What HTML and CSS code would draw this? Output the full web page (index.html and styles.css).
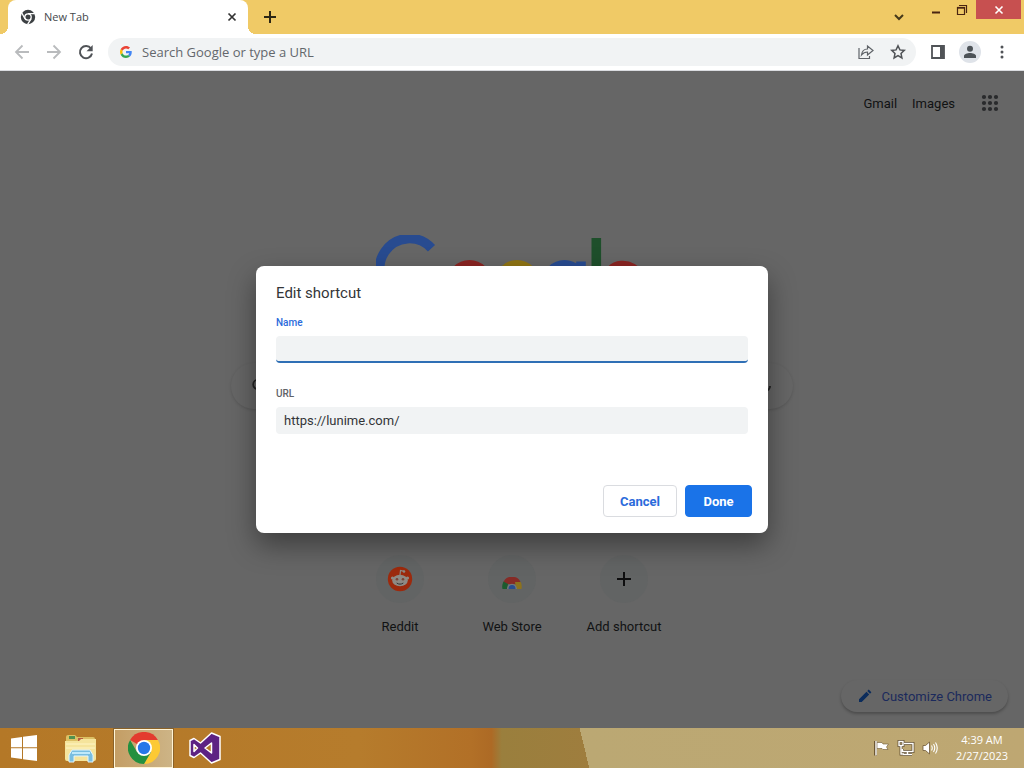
FILE: index.html
```html
<!DOCTYPE html>
<html lang="en">
<head>
<meta charset="utf-8">
<title>New Tab</title>
<link rel="stylesheet" href="styles.css">
</head>
<body>
<div class="tabstrip">
  <div class="tab">
    <svg class="tab-icon" width="16" height="16" viewBox="0 0 16 16"><circle cx="8" cy="8" r="7.2" fill="#3c4043"/><circle cx="8" cy="8" r="3.2" fill="none" stroke="#fff" stroke-width="1.3"/><path d="M8 4.6h6.8M5 9.8 1.8 4M11 9.8 7.6 15.4" stroke="#fff" stroke-width="1.3" fill="none"/></svg>
    <span class="tab-title">New Tab</span>
    <button class="icon-btn" aria-label="Close tab"><svg width="16" height="16" viewBox="0 0 16 16"><path d="m4.5 4.5 7 7m0-7-7 7" stroke="#333" stroke-width="1.7"/></svg></button>
  </div>
  <button class="icon-btn new-tab" aria-label="New tab"><svg width="16" height="16" viewBox="0 0 16 16"><path d="M8 2v12M2 8h12" stroke="#2c2614" stroke-width="2"/></svg></button>
  <div class="window-controls">
    <button class="icon-btn search-tabs" aria-label="Search tabs"><svg width="14" height="14" viewBox="0 0 14 14"><path d="m3 5 4 4 4-4" stroke="#46391a" stroke-width="2" fill="none"/></svg></button>
    <button class="icon-btn caption" aria-label="Minimize"><svg width="12" height="14" viewBox="0 0 12 14"><path d="M2 9.500h8" stroke="#4a2512" stroke-width="2"/></svg></button>
    <button class="icon-btn caption" aria-label="Restore"><svg width="12" height="12" viewBox="0 0 12 12"><path d="M1.500 3.500h7v7h-7zM3 1.500h7.500V9" stroke="#4a2512" stroke-width="1.200" fill="none"/><path d="M1 3.800h8" stroke="#4a2512" stroke-width="1.800"/></svg></button>
    <button class="icon-btn close" aria-label="Close"><svg width="12" height="12" viewBox="0 0 12 12"><path d="m2.500 2.500 7 7m0-7-7 7" stroke="#fff" stroke-width="1.600"/></svg></button>
  </div>
</div>

<div class="toolbar">
  <button class="icon-btn nav" aria-label="Back"><svg width="16" height="16" viewBox="0 0 16 16"><path d="M15 8H2m6.500-6.500L2 8l6.500 6.500" stroke="#b9bbbd" stroke-width="1.800" fill="none"/></svg></button>
  <button class="icon-btn nav" aria-label="Forward"><svg width="16" height="16" viewBox="0 0 16 16"><path d="M1 8h13M7.500 1.500 14 8l-6.500 6.500" stroke="#b9bbbd" stroke-width="1.800" fill="none"/></svg></button>
  <button class="icon-btn nav" aria-label="Reload"><svg width="16" height="16" viewBox="0 0 16 16"><path d="M13 4.500A6.100 6.100 0 1 0 14 9.500" stroke="#505357" stroke-width="2" fill="none"/><path d="M14.700 1v6.200H8.500z" fill="#505357"/></svg></button>
  <div class="omnibox">
    <svg width="12" height="12" viewBox="0 0 48 48"><path fill="#EA4335" d="M24 9.500c3.540 0 6.710 1.220 9.210 3.600l6.850-6.850C35.900 2.380 30.470 0 24 0 14.620 0 6.510 5.380 2.560 13.220l7.980 6.190C12.430 13.720 17.740 9.500 24 9.500z"/><path fill="#4285F4" d="M46.980 24.550c0-1.570-.150-3.090-.380-4.550H24v9.020h12.940c-.580 2.960-2.260 5.480-4.780 7.180l7.730 6c4.510-4.180 7.090-10.360 7.090-17.650z"/><path fill="#FBBC05" d="M10.530 28.590c-.480-1.450-.760-2.990-.760-4.590s.270-3.140.760-4.590l-7.980-6.190C.920 16.460 0 20.120 0 24s.920 7.540 2.560 10.780l7.970-6.190z"/><path fill="#34A853" d="M24 48c6.480 0 11.930-2.130 15.890-5.810l-7.730-6c-2.150 1.450-4.920 2.300-8.160 2.300-6.260 0-11.570-4.220-13.470-9.910l-7.980 6.190C6.510 42.620 14.620 48 24 48z"/></svg>
    <input class="address" type="text" placeholder="Search Google or type a URL" aria-label="Address bar">
    <button class="icon-btn" aria-label="Share"><svg width="18" height="16" viewBox="0 0 18 16"><path d="M2 4v10.500h10.500V12M4.500 11c.5-4 3-6 6-6V2l5.500 4.500-5.500 4.500V8C8 8 6.200 8.800 4.500 11z" stroke="#5f6368" stroke-width="1.200" fill="none"/></svg></button>
    <button class="icon-btn" aria-label="Bookmark"><svg width="16" height="16" viewBox="0 0 16 16"><path d="m8 1.800 1.900 4.100 4.400.5L11 9.400l.9 4.500L8 11.600l-3.900 2.300.9-4.500-3.300-3 4.400-.5z" stroke="#505357" stroke-width="1.500" fill="none"/></svg></button>
  </div>
  <button class="icon-btn panel" aria-label="Side panel"><svg width="14" height="14" viewBox="0 0 14 14"><path d="M1 1h12v12H1z" stroke="#505357" stroke-width="1.800" fill="none"/><path d="M9 1h4v12H9z" fill="#505357"/></svg></button>
  <button class="icon-btn avatar" aria-label="Profile"><svg width="14" height="14" viewBox="0 0 14 14"><circle cx="7" cy="3.800" r="3" fill="#4d5358"/><path d="M1 13v-2c0-2 3.500-3 6-3s6 1 6 3v2z" fill="#4d5358"/></svg></button>
  <button class="icon-btn more" aria-label="Menu"><svg width="4" height="14" viewBox="0 0 4 14"><g fill="#505357"><circle cx="2" cy="2" r="1.500"/><circle cx="2" cy="7" r="1.500"/><circle cx="2" cy="12" r="1.500"/></g></svg></button>
</div>

<main class="page">
  <nav class="page-nav">
    <a href="#gmail">Gmail</a>
    <a href="#images">Images</a>
    <button class="icon-btn apps" aria-label="Google apps"><svg width="18" height="18" viewBox="0 0 18 18"><path d="M3 3h0M9 3h0M15 3h0M3 9h0M9 9h0M15 9h0M3 15h0M9 15h0M15 15h0" stroke="#292a2c" stroke-width="4.200" stroke-linecap="round"/></svg></button>
  </nav>
  <svg class="logo" width="272" height="92" viewBox="0 0 272 92" fill="none" stroke-width="9.600" role="img" aria-label="Google">
    <path d="M55.500 13.300A29.700 29.700 0 1 0 63 36.700H36" stroke="#284b90"/>
    <circle cx="93.500" cy="47.200" r="17.500" stroke="#8a2422"/>
    <circle cx="141" cy="47.200" r="17.500" stroke="#8f7414"/>
    <path d="M205 26.500V67c0 11-7 17-16 17-7 0-12-4-14.500-9" stroke="#284b90"/><circle cx="188.500" cy="47.200" r="17.500" stroke="#284b90"/>
    <path d="M220.300 3v65" stroke="#1e4f2b"/>
    <path d="M232 55l32-13c-6-16-33-16-33 5 0 19 25 24 34 10" stroke="#8a2422"/>
  </svg>
  <div class="search">
    <svg width="16" height="16" viewBox="0 0 16 16"><circle cx="7" cy="6.500" r="4.800" stroke="#222" stroke-width="1.800" fill="none"/><path d="m10.500 10 4 4" stroke="#222" stroke-width="1.800"/></svg>
    <svg width="16" height="16" viewBox="0 0 16 16"><path d="M8 1v7M3 8a5 5 0 0 0 10 0M8 13v3" stroke="#222" stroke-width="2" fill="none"/></svg>
  </div>
  <div class="shortcuts">
    <a class="shortcut" href="#reddit"><span class="tile"><svg width="26" height="26" viewBox="0 0 26 26"><circle cx="13" cy="13" r="12.200" fill="#9c2a0d"/><path d="m13 9 .5-4.500 3.700.8" stroke="#8e8a84" stroke-width="1.200" fill="none"/><circle cx="17" cy="5.500" r="1.300" fill="#8e8a84"/><circle cx="5.500" cy="12" r="1.600" fill="#8e8a84"/><circle cx="20.500" cy="12" r="1.600" fill="#8e8a84"/><ellipse cx="13" cy="14.500" rx="7.800" ry="5.800" fill="#8e8a84"/><circle cx="10" cy="13.200" r="1.300" fill="#7a4436"/><circle cx="16" cy="13.200" r="1.300" fill="#7a4436"/><path d="M9.700 17c2 1.500 4.600 1.500 6.600 0" stroke="#333" fill="none"/></svg></span>Reddit</a>
    <a class="shortcut" href="#store"><span class="tile"><svg class="store" width="20" height="20" viewBox="0 0 20 20"><path d="M1.500 9C3 5.500 5.500 4 8 4h4c2.500 0 5 1.500 6.500 5L15 11H5z" fill="#862b26"/><path d="M1.500 8.500 6 11l-1 5H.5c-.7-3 0-5 1-7.500z" fill="#1c5b2e"/><path d="M13 9h5.700c1 2 1.200 4.500.8 7H14z" fill="#8d721d"/><path d="M5 16a5 5.300 0 0 1 10 0z" fill="#75777a"/><path d="M6.500 16a3.500 4 0 0 1 7 0z" fill="#294d91"/></svg></span>Web Store</a>
    <a class="shortcut" href="#add"><span class="tile"><svg width="16" height="16" viewBox="0 0 16 16"><path d="M8 1v14M1 8h14" stroke="#0e0e0f" stroke-width="2"/></svg></span>Add shortcut</a>
  </div>
  <button class="customize"><svg width="16" height="16" viewBox="0 0 16 16"><path d="m2 11.300 7.500-7.500 2.700 2.700L4.700 14H2zM10.300 3l1.400-1.400 2.700 2.700L13 5.700z" fill="#0b2c5c"/></svg>Customize Chrome</button>

  <div class="backdrop">
    <form class="dialog" role="dialog" aria-labelledby="dialog-title">
      <h1 class="dialog-title" id="dialog-title">Edit shortcut</h1>
      <label class="label label-active" for="name">Name</label>
      <input class="field field-active" id="name" type="text">
      <label class="label" for="url">URL</label>
      <input class="field" id="url" type="text" value="https://lunime.com/">
      <div class="actions">
        <button class="btn" type="button">Cancel</button>
        <button class="btn btn-primary" type="button">Done</button>
      </div>
    </form>
  </div>
</main>

<footer class="taskbar">
  <button class="icon-btn task" aria-label="Start"><svg width="28" height="28" viewBox="0 0 28 28"><path d="M1 4.500 12 3v10.300H1zM13 2.800 27 1v12.300H13zM1 14.300h11V25L1 23.500zM13 14.300h14V27l-14-1.800z" fill="#fff"/></svg></button>
  <button class="icon-btn task" aria-label="File Explorer"><svg width="34" height="32" viewBox="0 0 34 32"><path d="M2 5q0-2 2-2h7l2 2h16q2 0 2 2v20H2z" fill="#dcc064"/><path d="M5 4h6v3H5z" fill="#52914f"/><path d="M14 6h5v3h-5z" fill="#b65b42"/><path d="M23 7h6v3h-6z" fill="#4c91b3"/><path d="M1 9h14l2-2h15v20q0 2-2 2H3q-2 0-2-2z" fill="#f5e49c"/><path d="M2 12h29M2 16h29" stroke="#fff5c5"/><path d="M5 30v-7l3-5h18l3 5v7h-5v-6H10v6z" fill="#79bee0" stroke="#e2f5fc"/><path d="M8 21h18" stroke="#bfe9fa" stroke-width="2"/></svg></button>
  <button class="icon-btn task task-active" aria-label="Google Chrome"><svg width="32" height="32" viewBox="0 0 32 32"><path d="M16 16 2.100 8A16 16 0 0 1 29.900 8z" fill="#e33b2e"/><path d="M16 8h13.900A16 16 0 0 1 16 32l7-12z" fill="#fcc934"/><path d="M2.100 8A16 16 0 0 0 16 32l7-12-14 0z" fill="#23903f"/><circle cx="16" cy="16" r="8" fill="#fff"/><circle cx="16" cy="16" r="6.200" fill="#2677e8"/></svg></button>
  <button class="icon-btn task" aria-label="Visual Studio"><svg width="34" height="34" viewBox="0 0 34 34"><path fill-rule="evenodd" d="M23.500 2 32 5.500v23L23.500 32 12.500 22 6 26.500 2 24.500V9.500L6 7.500l6.500 4.500zM23.500 12 17 17l6.500 5zM6 13.500v7L9.500 17z" fill="#5d2283" stroke="#fff" stroke-width="1.500" stroke-linejoin="round"/></svg></button>
  <div class="tray">
    <svg width="16" height="16" viewBox="0 0 16 16"><path d="M2.500 1.500V16M3 2.500h5l1 1.500h5.500L12.500 7l1.500 2.500H9L8 8.500H3z" fill="#fff" stroke="#6d5733" stroke-width=".6"/><path d="M1.500 1v14.500" stroke="#6d5733" stroke-width="3"/><path d="M2 1v14.500" stroke="#fff" stroke-width="1.400"/></svg>
    <svg width="18" height="16" viewBox="0 0 18 16"><path d="M7 3.500h9v8H5.500V9M10.500 12v2.500M6 14.500h9M2 1.500h4v4H2zM4 6v8h3" fill="none" stroke="#5e4b2d" stroke-width="2.800"/><path d="M7 3.500h9v8H5.500V9M10.500 12v2.500M6 14.500h9M2 1.500h4v4H2zM4 6v8h3" fill="none" stroke="#fff" stroke-width="1.400"/></svg>
    <svg width="16" height="16" viewBox="0 0 16 16"><path d="M1 5.500h2.500L7.500 2v12l-4-3.500H1z" fill="#fff" stroke="#6d5733" stroke-width=".8"/><path d="M9.500 5.500q1.500 2.500 0 5M11.500 4q2.500 4 0 8M13.500 2.500q3.500 5.500 0 11" stroke="#fff" stroke-width="1.100" fill="none"/></svg>
    <div class="clock"><time>4:39 AM</time><time>2/27/2023</time></div>
  </div>
</footer>
</body>
</html>
```
FILE: styles.css
```css
* { box-sizing: border-box; }

body {
  margin: 0;
  min-height: 100vh;
  display: flex;
  flex-direction: column;
  font-family: Roboto, "Liberation Sans", sans-serif;
  font-size: 13px;
  background: #fff;
}

button, input { font: inherit; }
a { color: inherit; text-decoration: none; }
svg { display: block; flex: none; }

.icon-btn {
  display: flex;
  align-items: center;
  justify-content: center;
  padding: 0;
  border: 0;
  background: none;
}

.tabstrip {
  display: flex;
  align-items: center;
  height: 34px;
  padding-left: 8px;
  background: #f0ca66;
}

.tab {
  position: relative;
  display: flex;
  align-items: center;
  gap: 8px;
  width: 240px;
  height: 34px;
  padding: 0 8px 0 12px;
  border-radius: 8px 8px 0 0;
  background: #fff;
}

.tab::before, .tab::after {
  content: "";
  position: absolute;
  bottom: 0;
  width: 8px;
  height: 8px;
}
.tab::before { left: -8px; background: radial-gradient(circle at 0 0, transparent 8px, #fff 8px); }
.tab::after { right: -8px; background: radial-gradient(circle at 100% 0, transparent 8px, #fff 8px); }

.tab-title {
  flex: 1;
  font: 11px/16px "Open Sans", sans-serif;
  color: #45484c;
}

.new-tab { width: 28px; height: 28px; margin-left: 8px; }

.window-controls {
  display: flex;
  align-items: flex-start;
  align-self: stretch;
  margin-left: auto;
  padding-right: 3px;
}
.search-tabs { width: 28px; height: 34px; margin-right: 10px; }
.caption { width: 26px; height: 20px; }
.close { width: 45px; height: 19px; margin-left: 1px; background: #c75050; }

.toolbar {
  display: flex;
  align-items: center;
  height: 37px;
  padding: 0 8px 0 6px;
  background: #fff;
  border-bottom: 1px solid #dadce0;
}
.nav { width: 32px; height: 28px; }

.omnibox {
  display: flex;
  align-items: center;
  flex: 1;
  gap: 8px;
  height: 28px;
  margin: 0 8px 0 6px;
  padding: 0 6px 0 12px;
  border-radius: 14px;
  background: #f1f3f4;
}
.omnibox .icon-btn { width: 24px; height: 24px; }

.address {
  flex: 1;
  min-width: 0;
  padding: 0 2px;
  border: 0;
  outline: 0;
  background: none;
  font: 13px "Open Sans", sans-serif;
}
.address::placeholder { color: #63676c; opacity: 1; }

.panel { width: 28px; height: 28px; }
.avatar {
  width: 22px;
  height: 22px;
  margin: 0 7px;
  border-radius: 50%;
  background: #dfe3e9;
}
.more { width: 28px; height: 28px; }

.page {
  position: relative;
  flex: 1;
  display: flex;
  flex-direction: column;
  align-items: center;
  background: #666;
  color: #111213;
}

.page-nav {
  display: flex;
  align-items: center;
  align-self: stretch;
  justify-content: flex-end;
  gap: 15px;
  height: 64px;
  padding-right: 24px;
}
.apps { width: 20px; height: 40px; margin-left: 10px; }

.logo { margin-top: 100px; }

.search {
  display: flex;
  align-items: center;
  justify-content: space-between;
  width: 562px;
  max-width: 90%;
  height: 46px;
  margin-top: 36px;
  padding: 0 20px;
  border-radius: 23px;
  box-shadow: 0 1px 3px rgba(0, 0, 0, .15);
}

.shortcuts { display: flex; margin-top: 146px; }
.shortcut {
  display: flex;
  flex-direction: column;
  align-items: center;
  gap: 16px;
  width: 112px;
  line-height: 16px;
}
.tile {
  display: flex;
  align-items: center;
  justify-content: center;
  width: 48px;
  height: 48px;
  border-radius: 50%;
  background: #626464;
}
.store { margin-top: 8px; }

.customize {
  display: flex;
  align-items: center;
  gap: 8px;
  height: 32px;
  margin: auto 16px 16px auto;
  padding: 0 16px;
  border: 0;
  border-radius: 16px;
  background: #666;
  box-shadow: 0 2px 3px rgba(0, 0, 0, .25);
  color: #1b2a5c;
}

.backdrop {
  position: absolute;
  inset: 0;
  display: flex;
  align-items: center;
  justify-content: center;
}

.dialog {
  display: flex;
  flex-direction: column;
  width: 512px;
  max-width: 90%;
  padding: 16px 16px 16px 20px;
  border-radius: 8px;
  background: #fff;
  box-shadow: 0 12px 28px rgba(0, 0, 0, .4);
}
.dialog-title {
  margin: 0 0 11px;
  font-size: 15px;
  font-weight: 400;
  line-height: 22px;
  color: #333538;
}
.label {
  margin-bottom: 5px;
  font-size: 10px;
  font-weight: 500;
  line-height: 16px;
  color: #5f6368;
}
.label-active { color: #2b6bdb; }
.field {
  height: 27px;
  margin: 0 4px 0 0;
  padding: 0 8px;
  border: 0;
  border-radius: 4px;
  outline: 0;
  background: #f1f3f4;
  color: #333538;
}
.field-active { margin-bottom: 23px; border-bottom: 2px solid #2f6fb5; }

.actions {
  display: flex;
  justify-content: flex-end;
  gap: 8px;
  margin-top: 51px;
}
.btn {
  height: 32px;
  padding: 0 16px;
  border: 1px solid #dadce0;
  border-radius: 4px;
  background: #fff;
  font-weight: 700;
  color: #2b6bdb;
}
.btn-primary { min-width: 67px; border-color: #1a73e8; background: #1a73e8; color: #fff; }

.taskbar {
  display: flex;
  align-items: center;
  height: 40px;
  background:
    linear-gradient(76deg, transparent 57%, #bba873 57%, #bea772 100%),
    linear-gradient(90deg, #b47827 0, #b67c2c 35%, #b27027 46%, #ad6a25 48%, #9a7f3d 49%, #a07d3e 60%);
}
.task { width: 48px; height: 40px; margin-right: 9px; }
.task-active {
  width: 59px;
  height: 39px;
  margin-right: 8px;
  border: 1px solid #fff4d5;
  outline: 1px solid #8a6229;
  background: linear-gradient(90deg, #c49e65, #cdb486);
}

.tray {
  display: flex;
  align-items: center;
  gap: 7px;
  margin-left: auto;
  padding-right: 16px;
}
.clock {
  display: flex;
  flex-direction: column;
  align-items: center;
  margin-left: 11px;
  font: 11px/16px "Open Sans", sans-serif;
  color: #fff;
}
```
